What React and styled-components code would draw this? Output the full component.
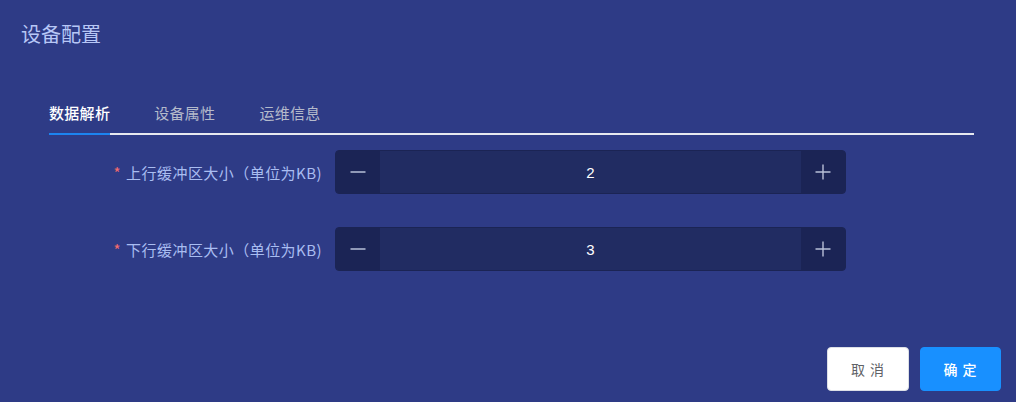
import React, { useState } from 'react'
import styled, { createGlobalStyle } from 'styled-components'

const GlobalStyle = createGlobalStyle`
  html, body {
    margin: 0;
    padding: 0;
    background: #2e3b86;
  }
  * {
    box-sizing: border-box;
  }
`

const Page = styled.div`
  display: flex;
  flex-direction: column;
  height: 402px;
  background: #2e3b86;
  font-family: "Noto Sans CJK SC", "Noto Sans", sans-serif;
`

const Title = styled.h2`
  margin: 0;
  padding: 22px 21px 0;
  font-size: 20px;
  line-height: 24px;
  font-weight: 400;
  color: #b7c7f6;
`

const Body = styled.div`
  padding: 47px 42px 0 49px;
`

const TabList = styled.div`
  display: flex;
  gap: 44px;
  height: 42px;
  border-bottom: 2px solid #e6e8ef;
`

const Tab = styled.div`
  height: 42px;
  line-height: 40px;
  margin-bottom: -2px;
  font-size: 15px;
  letter-spacing: 0.3px;
  cursor: pointer;
  color: ${p => (p.$active ? '#ffffff' : '#b4bacb')};
  font-weight: ${p => (p.$active ? 500 : 400)};
  border-bottom: 2px solid ${p => (p.$active ? '#1c84f0' : 'transparent')};
`

const Form = styled.div`
  display: flex;
  flex-direction: column;
  gap: 33px;
  margin-top: 15px;
  margin-left: -49px;
`

const Row = styled.div`
  display: flex;
  align-items: center;
  height: 44px;
`

const Label = styled.label`
  width: 335px;
  padding-right: 13px;
  text-align: right;
  font-size: 15px;
  letter-spacing: 0.45px;
  color: #a9bdf1;

  &::before {
    content: '*';
    color: #f56c6c;
    margin-right: 5px;
  }
`

const Stepper = styled.div`
  display: flex;
  width: 511px;
  height: 44px;
  border: 1px solid #1b2454;
  border-radius: 4px;
  overflow: hidden;
  background: #212c62;
`

const StepButton = styled.button`
  display: flex;
  align-items: center;
  justify-content: center;
  width: 44px;
  height: 100%;
  border: none;
  padding: 0;
  background: #1b2455;
  color: #b9c0d8;
  cursor: pointer;
`

const Value = styled.div`
  flex: 1;
  display: flex;
  align-items: center;
  justify-content: center;
  font-family: "Liberation Sans", Arial, sans-serif;
  font-size: 15px;
  color: #ffffff;
`

const Footer = styled.div`
  display: flex;
  justify-content: flex-end;
  gap: 11px;
  margin-top: auto;
  padding: 0 15px 11px;
`

const Button = styled.button`
  width: ${p => p.$w}px;
  height: 44px;
  border-radius: 4px;
  font-family: "Noto Sans CJK SC", sans-serif;
  font-size: 14px;
  letter-spacing: 1px;
  cursor: pointer;
  border: 1px solid ${p => (p.$primary ? '#1890ff' : '#dcdfe6')};
  background: ${p => (p.$primary ? '#1890ff' : '#ffffff')};
  color: ${p => (p.$primary ? '#ffffff' : '#606266')};
  font-weight: ${p => (p.$primary ? 500 : 400)};
`

const Minus = () => (
  <svg width="16" height="16" viewBox="0 0 16 16">
    <line x1="0.5" y1="8" x2="15.5" y2="8" stroke="currentColor" strokeWidth="1.6" />
  </svg>
)

const Plus = () => (
  <svg width="16" height="16" viewBox="0 0 16 16">
    <line x1="0.5" y1="8" x2="15.5" y2="8" stroke="currentColor" strokeWidth="1.4" />
    <line x1="8" y1="0.5" x2="8" y2="15.5" stroke="currentColor" strokeWidth="1.4" />
  </svg>
)

const NumberStepper = ({ value }) => (
  <Stepper>
    <StepButton><Minus /></StepButton>
    <Value>{value}</Value>
    <StepButton><Plus /></StepButton>
  </Stepper>
)

const tabs = ['数据解析', '设备属性', '运维信息']

const fields = [
  { label: '上行缓冲区大小（单位为KB)', value: 2 },
  { label: '下行缓冲区大小（单位为KB)', value: 3 },
]

export default function App() {
  const [active, setActive] = useState(0)

  return (
    <>
      <GlobalStyle />
      <Page>
        <Title>设备配置</Title>
        <Body>
          <TabList>
            {tabs.map((t, i) => (
              <Tab key={t} $active={i === active} onClick={() => setActive(i)}>{t}</Tab>
            ))}
          </TabList>
          <Form>
            {fields.map(f => (
              <Row key={f.label}>
                <Label>{f.label}</Label>
                <NumberStepper value={f.value} />
              </Row>
            ))}
          </Form>
        </Body>
        <Footer>
          <Button $w={82}>取 消</Button>
          <Button $w={81} $primary>确 定</Button>
        </Footer>
      </Page>
    </>
  )
}
